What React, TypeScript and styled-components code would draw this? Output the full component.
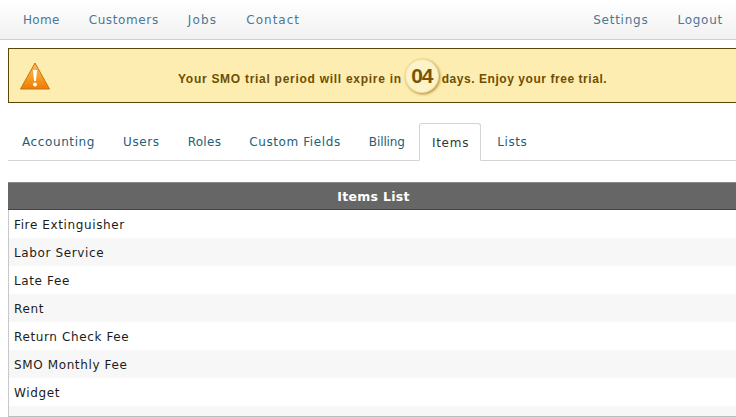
import React from 'react';
import styled, { createGlobalStyle } from 'styled-components';

const GlobalStyle = createGlobalStyle`
  html, body {
    margin: 0;
    padding: 0;
    width: 736px;
    height: 417px;
    overflow: hidden;
    background: #fff;
    font-family: "DejaVu Sans", Verdana, sans-serif;
  }
`;

const Page = styled.div`
  width: 736px;
  height: 417px;
  overflow: hidden;
`;

const TopBar = styled.nav`
  display: flex;
  justify-content: space-between;
  height: 39px;
  padding: 0 13px 0 23px;
  box-sizing: content-box;
  background: linear-gradient(#ffffff, #f1f1f1);
  border-bottom: 1px solid #cfcfcf;
`;

const NavGroup = styled.div`
  display: flex;
  align-items: center;
  gap: 29px;
`;

const NavLink = styled.a<{ $tracking: number }>`
  font-size: 12px;
  letter-spacing: ${(p) => p.$tracking}px;
  color: #4a7896;
`;

const Alert = styled.div`
  display: flex;
  align-items: center;
  box-sizing: border-box;
  width: 740px;
  height: 55px;
  margin: 8px 0 0 8px;
  padding: 0 11px;
  background: #fdedb0;
  border: 1px solid #5c4708;
`;

const AlertText = styled.div`
  display: flex;
  align-items: center;
  gap: 3px;
  margin-left: 128px;
  font-family: "Liberation Sans", Arial, sans-serif;
  font-size: 12px;
  font-weight: bold;
  color: #6f4e06;
`;

const AlertPhrase = styled.span<{ $tracking: number }>`
  padding-top: 6px;
  letter-spacing: ${(p) => p.$tracking}px;
`;

const DayBadge = styled.span`
  display: flex;
  align-items: center;
  justify-content: center;
  width: 34px;
  height: 34px;
  border-radius: 50%;
  background: #fdf3c8;
  box-shadow: inset 0 0 2px #d8b765, 1px 1px 3px #a98228;
  font-size: 21px;
  letter-spacing: -1.2px;
  color: #7a5406;
`;

const TabStrip = styled.div`
  display: flex;
  align-items: flex-end;
  height: 37px;
  margin: 20px 0 0 8px;
  border-bottom: 1px solid #d4d4d4;
`;

const Tab = styled.a<{ $active?: boolean; $tracking: number }>`
  display: flex;
  align-items: center;
  box-sizing: border-box;
  height: 38px;
  margin: ${(p) => (p.$active ? '0 2px -1px 0' : '0')};
  padding: ${(p) => (p.$active ? '2px 11px 0 12px' : '2px 14px 0')};
  font-size: 12px;
  letter-spacing: ${(p) => p.$tracking}px;
  color: ${(p) => (p.$active ? '#333' : '#22607a')};
  background: ${(p) => (p.$active ? '#fff' : 'transparent')};
  border: ${(p) => (p.$active ? '1px solid #d4d4d4' : 'none')};
  border-bottom-color: #fff;
  border-radius: 3px 3px 0 0;
`;

const ListPanel = styled.section`
  box-sizing: border-box;
  width: 731px;
  margin: 21px 0 0 8px;
  border-left: 1px solid #c8c8c8;
  border-bottom: 1px solid #bdbdbd;
`;

const ListHeader = styled.h2`
  display: flex;
  align-items: center;
  justify-content: center;
  box-sizing: border-box;
  height: 28px;
  margin: 0 0 0 -1px;
  background: #666;
  border-top: 1px solid #8a8a8a;
  border-bottom: 1px solid #444;
  font-size: 12.5px;
  font-weight: bold;
  letter-spacing: 0.3px;
  color: #fff;
`;

const ListRow = styled.div`
  display: flex;
  align-items: center;
  box-sizing: border-box;
  height: 28px;
  padding: 2px 0 0 5px;
  font-size: 12px;
  letter-spacing: 0.62px;
  color: #1c1c1c;
  background: #fff;

  &:nth-child(even) {
    background: #f7f7f7;
  }
`;

const ListEnd = styled.div`
  height: 10px;
  background: #f7f7f7;
`;

const WarningIcon = () => (
  <svg width="30" height="28" viewBox="0 0 30 28" style={{ flex: 'none' }}>
    <defs>
      <linearGradient id="warn" x1="0" y1="0" x2="0" y2="1">
        <stop offset="0" stopColor="#f8c06a" />
        <stop offset="0.6" stopColor="#f59a1e" />
        <stop offset="1" stopColor="#ee7b06" />
      </linearGradient>
    </defs>
    <path d="M15 1 L29.5 27 L0.5 27 Z" fill="url(#warn)" stroke="#c9730f" strokeWidth="1" strokeLinejoin="round" />
    <path d="M13 8 h4 l-1 11 h-2 Z" fill="#fff" />
    <circle cx="15" cy="22.5" r="2" fill="#fff" />
  </svg>
);

const navLeft = [
  { label: 'Home', tracking: 0.3 },
  { label: 'Customers', tracking: 0.62 },
  { label: 'Jobs', tracking: 1.2 },
  { label: 'Contact', tracking: 1 },
];
const navRight = [
  { label: 'Settings', tracking: 0.75 },
  { label: 'Logout', tracking: 0.75 },
];
const tabs = [
  { label: 'Accounting', tracking: 0.6 },
  { label: 'Users', tracking: 0.6 },
  { label: 'Roles', tracking: 0.3 },
  { label: 'Custom Fields', tracking: 0.6 },
  { label: 'Billing', tracking: -0.1 },
  { label: 'Items', tracking: 0.75 },
  { label: 'Lists', tracking: 0.6 },
];
const items = ['Fire Extinguisher', 'Labor Service', 'Late Fee', 'Rent', 'Return Check Fee', 'SMO Monthly Fee', 'Widget'];

const App: React.FC = () => (
  <Page>
    <GlobalStyle />
    <TopBar>
      <NavGroup>
        {navLeft.map((n) => (
          <NavLink key={n.label} $tracking={n.tracking}>
            {n.label}
          </NavLink>
        ))}
      </NavGroup>
      <NavGroup>
        {navRight.map((n) => (
          <NavLink key={n.label} $tracking={n.tracking}>
            {n.label}
          </NavLink>
        ))}
      </NavGroup>
    </TopBar>
    <Alert>
      <WarningIcon />
      <AlertText>
        <AlertPhrase $tracking={0.72}>Your SMO trial period will expire in</AlertPhrase>
        <DayBadge>04</DayBadge>
        <AlertPhrase $tracking={0.55}>days. Enjoy your free trial.</AlertPhrase>
      </AlertText>
    </Alert>
    <TabStrip>
      {tabs.map((t) => (
        <Tab key={t.label} $active={t.label === 'Items'} $tracking={t.tracking}>
          {t.label}
        </Tab>
      ))}
    </TabStrip>
    <ListPanel>
      <ListHeader>Items List</ListHeader>
      <div>
        {items.map((i) => (
          <ListRow key={i}>{i}</ListRow>
        ))}
      </div>
      <ListEnd />
    </ListPanel>
  </Page>
);

export default App;
